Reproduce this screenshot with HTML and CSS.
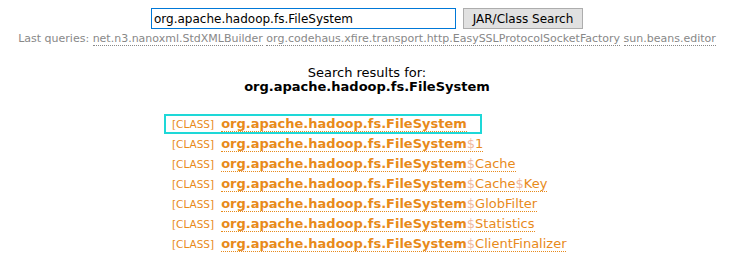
FILE: index.html
```html
<!DOCTYPE html>
<html>
<head>
<meta charset="utf-8">
<link rel="stylesheet" href="styles.css">
</head>
<body>
<div class="page">
  <form class="search">
    <div class="search-row">
      <input class="query" type="text" value="org.apache.hadoop.fs.FileSystem">
      <button class="go" type="button">JAR/Class Search</button>
    </div>
    <div class="last">Last queries: <a href="#">net.n3.nanoxml.StdXMLBuilder</a> <a href="#">org.codehaus.xfire.transport.http.EasySSLProtocolSocketFactory</a> <a href="#">sun.beans.editor</a></div>
  </form>
  <div class="heading">
    <div class="for">Search results for:</div>
    <div class="term">org.apache.hadoop.fs.FileSystem</div>
  </div>
  <ul class="results">
    <li class="row selected"><span class="kind">[CLASS]</span> <a href="#"><b>org.apache.hadoop.fs.FileSystem</b></a></li>
    <li class="row"><span class="kind">[CLASS]</span> <a href="#"><b>org.apache.hadoop.fs.FileSystem</b><span class="d">$</span>1</a></li>
    <li class="row"><span class="kind">[CLASS]</span> <a href="#"><b>org.apache.hadoop.fs.FileSystem</b><span class="d">$</span>Cache</a></li>
    <li class="row"><span class="kind">[CLASS]</span> <a href="#"><b>org.apache.hadoop.fs.FileSystem</b><span class="d">$</span>Cache<span class="d">$</span>Key</a></li>
    <li class="row"><span class="kind">[CLASS]</span> <a href="#"><b>org.apache.hadoop.fs.FileSystem</b><span class="d">$</span>GlobFilter</a></li>
    <li class="row"><span class="kind">[CLASS]</span> <a href="#"><b>org.apache.hadoop.fs.FileSystem</b><span class="d">$</span>Statistics</a></li>
    <li class="row"><span class="kind">[CLASS]</span> <a href="#"><b>org.apache.hadoop.fs.FileSystem</b><span class="d">$</span>ClientFinalizer</a></li>
  </ul>
</div>
</body>
</html>
```
FILE: styles.css
```css
html, body { margin: 0; padding: 0; background: #fff; }
body { font-family: "DejaVu Sans", Verdana, sans-serif; color: #000; }
.page { width: 734px; }
.search { margin: 0; padding-top: 8px; display: flex; flex-direction: column; align-items: center; }
.search-row { display: flex; gap: 7px; align-items: flex-start; }
.query {
  width: 299px; height: 19px; box-sizing: content-box; margin: 0;
  border: 1px solid #0078d7; padding: 0 2px; outline: none;
  font-family: "DejaVu Sans", Verdana, sans-serif; font-size: 12px; color: #000;
}
.go {
  height: 21px; width: 120px; margin: 0; padding: 0;
  background: #e1e1e1; border: 1px solid #adadad; border-radius: 0;
  font-family: "DejaVu Sans", Verdana, sans-serif; font-size: 12px; color: #000;
}
.last { margin-top: 3px; font-size: 11px; color: #888; line-height: 14px; white-space: nowrap; }
.last a { color: #888; text-decoration: none; border-bottom: 1px dotted #888; }
.heading { margin-top: 17px; text-align: center; font-size: 13px; line-height: 16px; }
.for { position: relative; top: 2px; }
.term { font-weight: bold; }
.results { list-style: none; margin: 19px 0 0 164px; padding: 0; }
.row { height: 20px; font-size: 13px; padding: 0 0 0 8px; box-sizing: border-box; display: flex; align-items: center; }
.row.selected { width: 318px; border: 2px solid #1ed8d8; padding-left: 6px; }
.kind { color: #e88a1a; font-size: 10.5px; margin-right: 7px; }
.row a { color: #e88a1a; text-decoration: none; border-bottom: 1px dotted #e88a1a; line-height: 15px; }
.row a b { font-weight: bold; }
.d { color: #f0b8a0; }
```
